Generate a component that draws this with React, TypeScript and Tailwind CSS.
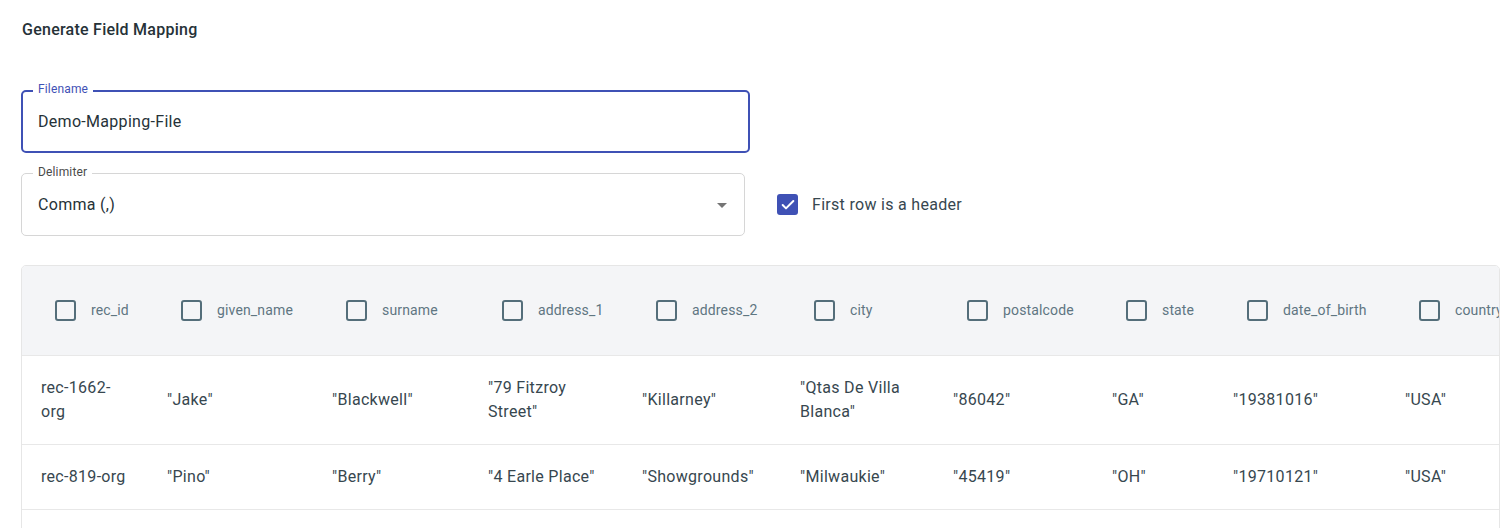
import { Check } from 'lucide-react'

type Column = { key: string; width: number }

const columns: Column[] = [
  { key: 'rec_id', width: 126 },
  { key: 'given_name', width: 165 },
  { key: 'surname', width: 156 },
  { key: 'address_1', width: 154 },
  { key: 'address_2', width: 158 },
  { key: 'city', width: 153 },
  { key: 'postalcode', width: 159 },
  { key: 'state', width: 121 },
  { key: 'date_of_birth', width: 172 },
  { key: 'country', width: 150 },
]

const rows: string[][] = [
  ['rec-1662-org', '"Jake"', '"Blackwell"', '"79 Fitzroy Street"', '"Killarney"', '"Qtas De Villa Blanca"', '"86042"', '"GA"', '"19381016"', '"USA"'],
  ['rec-819-org', '"Pino"', '"Berry"', '"4 Earle Place"', '"Showgrounds"', '"Milwaukie"', '"45419"', '"OH"', '"19710121"', '"USA"'],
  ['', '', '', '', '', '', '', '', '', ''],
]

function HeaderCheckbox() {
  return <span className="ml-[14px] inline-block h-[21px] w-[21px] shrink-0 rounded-[3px] border-[2.5px] border-[#546e7a]" />
}

export default function App() {
  return (
    <div className="min-h-screen bg-white px-[21px] pt-[20px] font-['Roboto',sans-serif] text-[#37474f]">
      <h1 className="pl-px text-[16px] leading-[20px] font-medium tracking-[0.25px] text-[#263238]">Generate Field Mapping</h1>

      {/* Filename (focused outlined input) */}
      <div className="relative mt-[50px] w-[729px]">
        <div className="flex h-[63px] items-center rounded-[5px] border-2 border-[#3f51b5] px-[15px]">
          <span className="text-[16px] tracking-[0.3px] text-[#263238]">Demo-Mapping-File</span>
        </div>
        <span className="absolute -top-[9px] left-[12px] bg-white px-[5px] text-[12px] leading-[16px] tracking-[0.15px] text-[#3f51b5]">
          Filename
        </span>
      </div>

      <div className="mt-[20px] flex items-center">
        {/* Delimiter select */}
        <div className="relative w-[724px]">
          <div className="flex h-[63px] items-center justify-between rounded-[5px] border border-[#d6d6d6] pr-[17px] pl-[16px]">
            <span className="text-[16px] tracking-[0.3px] text-[#263238]">Comma (,)</span>
            <span className="mt-[2px] h-0 w-0 border-x-[5px] border-t-[5px] border-x-transparent border-t-[#757575]" />
          </div>
          <span className="absolute -top-[9px] left-[12px] bg-white px-[5px] text-[12px] leading-[16px] tracking-[0.15px] text-[#4a4a4a]">
            Delimiter
          </span>
        </div>

        <label className="ml-[32px] flex items-center">
          <span className="flex h-[21px] w-[21px] items-center justify-center rounded-[3px] bg-[#3f51b5]">
            <Check size={16} strokeWidth={3} className="text-white" />
          </span>
          <span className="ml-[14px] text-[16px] tracking-[0.3px] text-[#37474f]">First row is a header</span>
        </label>
      </div>

      {/* Preview table */}
      <div className="mt-[29px] w-[1479px] overflow-hidden rounded-[5px] border border-[#e6e6e6]">
        <table className="table-fixed border-collapse" style={{ width: columns.reduce((s, c) => s + c.width, 0) }}>
          <colgroup>
            {columns.map(c => (
              <col key={c.key} style={{ width: c.width }} />
            ))}
          </colgroup>
          <thead>
            <tr className="h-[89px] bg-[#f4f5f7]">
              {columns.map(c => (
                <th key={c.key} className="pl-[19px] text-left font-normal">
                  <div className="flex items-center">
                    <HeaderCheckbox />
                    <span className="ml-[15px] text-[14px] tracking-[0.15px] whitespace-nowrap text-[#5f7682]">{c.key}</span>
                  </div>
                </th>
              ))}
            </tr>
          </thead>
          <tbody>
            {rows.map((r, i) => (
              <tr key={i} className="border-t border-[#e8e8e8]">
                {r.map((v, j) => (
                  <td key={j} className="py-[20px] pr-[16px] pl-[19px] align-middle text-[16px] leading-[24px] tracking-[0.3px] text-[#37474f]">
                    {v || '\u00a0'}
                  </td>
                ))}
              </tr>
            ))}
          </tbody>
        </table>
      </div>
    </div>
  )
}
